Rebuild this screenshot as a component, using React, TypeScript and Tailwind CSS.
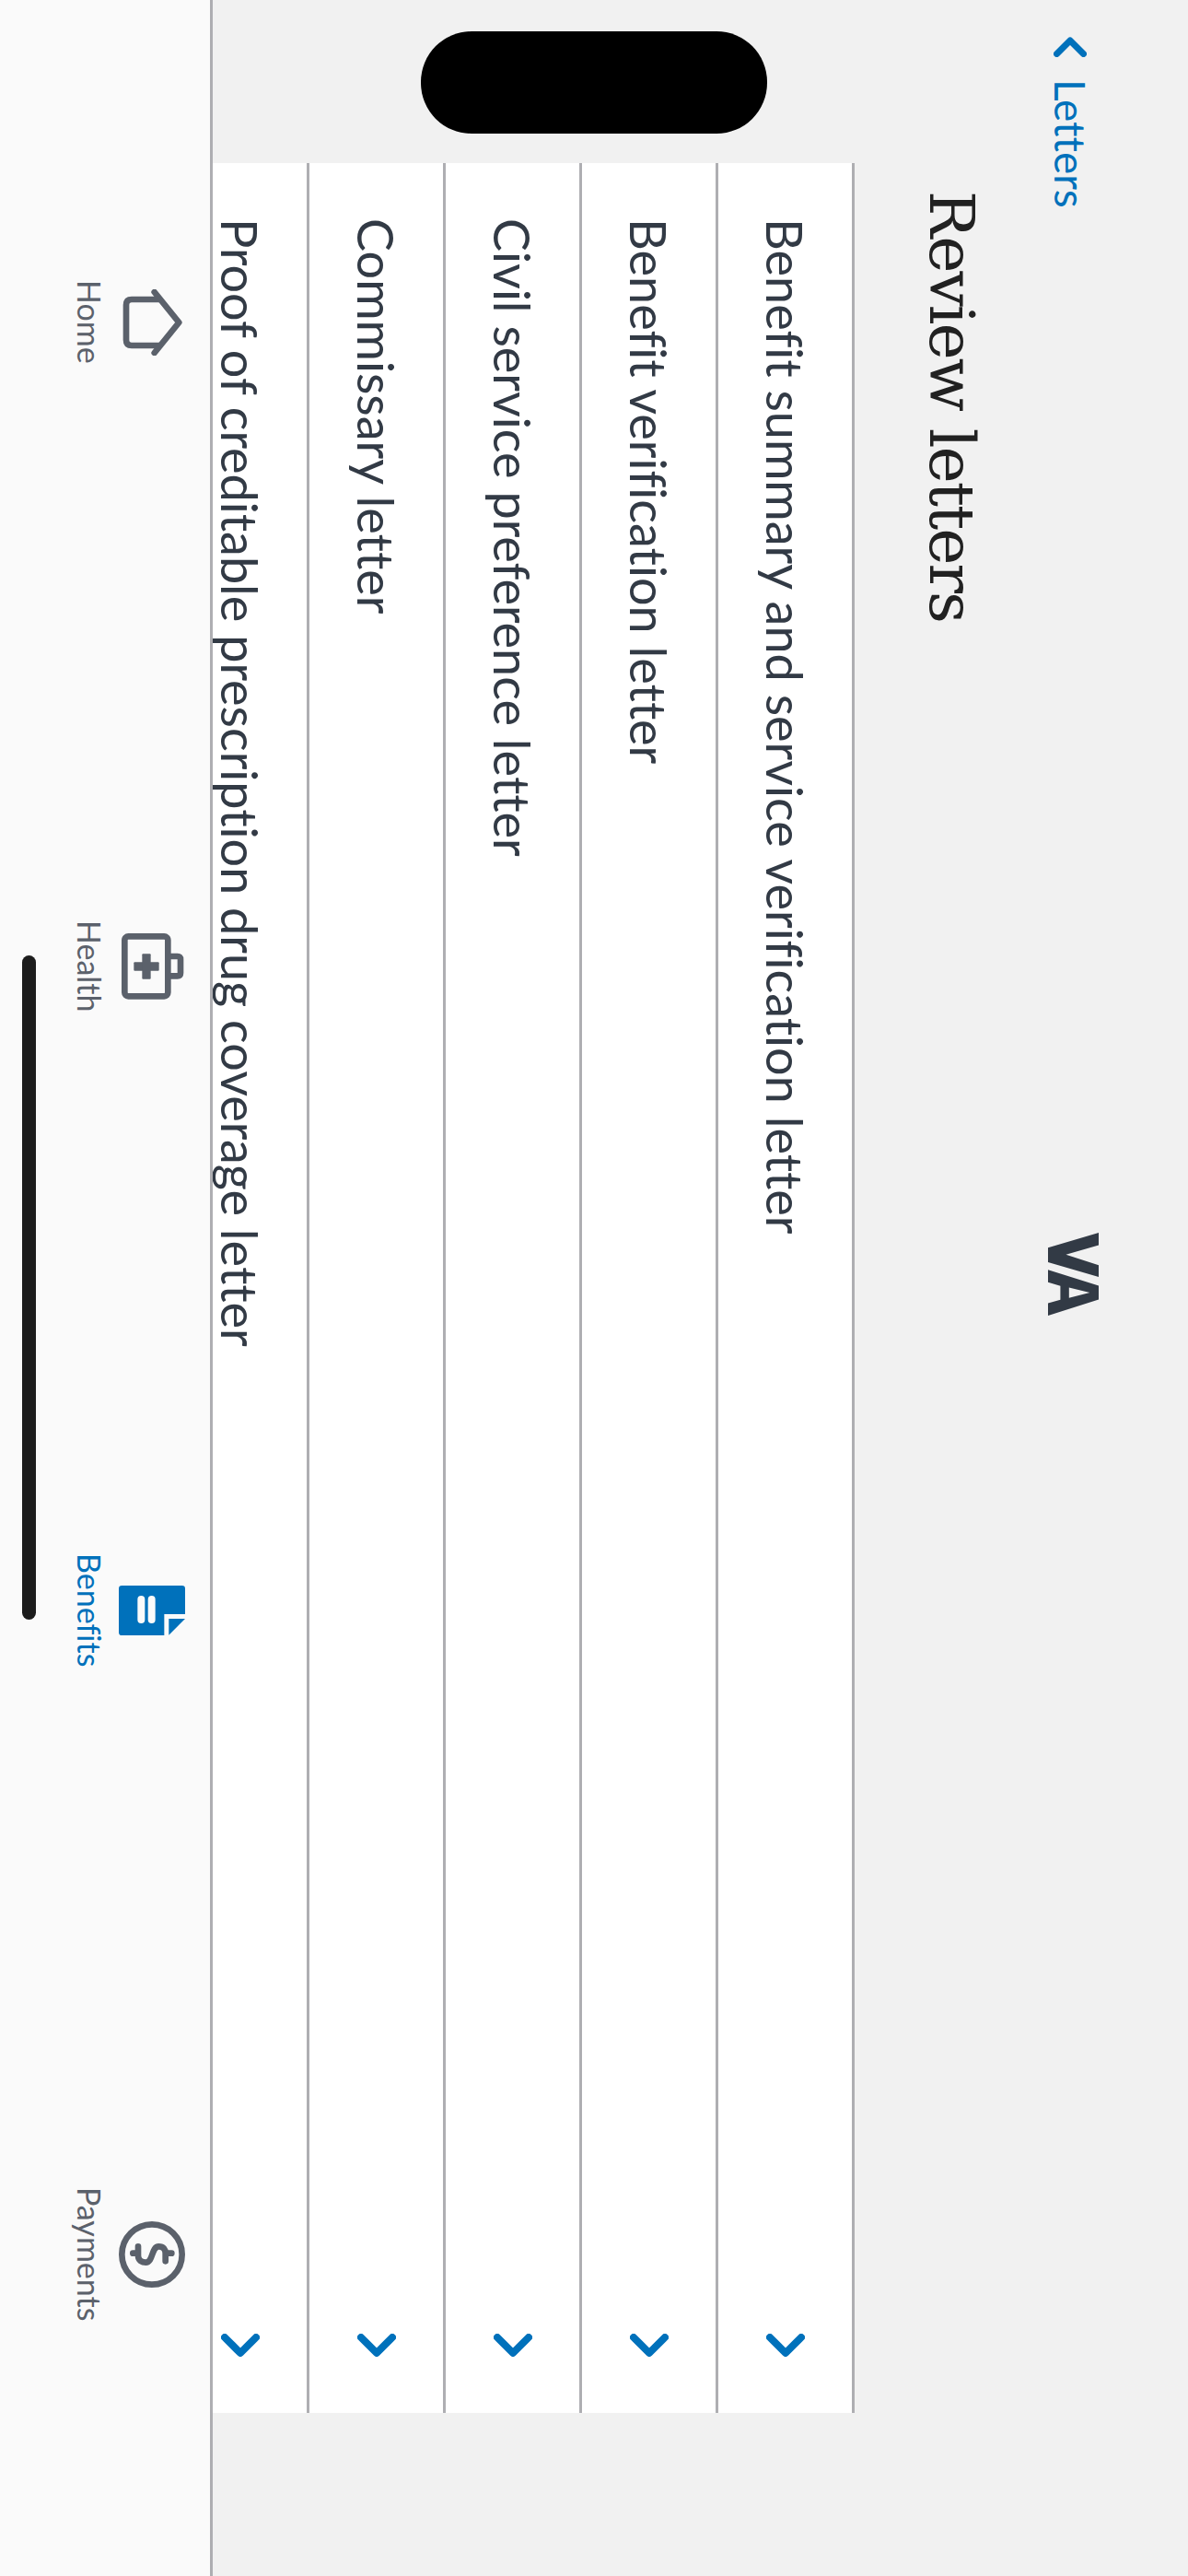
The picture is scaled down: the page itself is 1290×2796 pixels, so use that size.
function RowChevron() {
  return (
    <svg width="42" height="26" viewBox="0 0 42 26" fill="none" className="shrink-0">
      <path d="M4 4 L21 21 L38 4" stroke="#0071bb" strokeWidth="8" strokeLinecap="round" strokeLinejoin="round" />
    </svg>
  );
}

function BackChevron() {
  return (
    <svg width="36" height="22" viewBox="0 0 36 22" fill="none" className="shrink-0">
      <path d="M3.5 18.5 L18 4 L32.5 18.5" stroke="#0071bb" strokeWidth="7" strokeLinecap="round" strokeLinejoin="round" />
    </svg>
  );
}

function VaLogo() {
  return (
    <svg width="55" height="90" viewBox="177 112 164 268" fill="#323a45" className="shrink-0">
      <polygon points="341,112 341,152 235,183 341,217 341,255 177,207 177,160" />
      <path fillRule="evenodd" d="M177 232 L341 283 L341 328 L177 380 L177 340 L217 329 L217 284 L177 272 Z M245 289 L312 306 L245 323 Z" />
    </svg>
  );
}

function HomeIcon() {
  return (
    <svg width="72" height="72" viewBox="0 0 216 216" fill="none" stroke="#5b616b" strokeWidth="20" strokeLinecap="round" strokeLinejoin="round">
      <path d="M116 9 L196 108 L116 207" />
      <path d="M135 33 H42 Q24 33 24 51 V165 Q24 183 42 183 H135" strokeLinecap="butt" />
    </svg>
  );
}

function HealthIcon() {
  return (
    <svg width="72" height="72" viewBox="0 0 216 216" fill="none" stroke="#5b616b" strokeWidth="20">
      <rect x="19" y="10" width="141" height="195" rx="12" />
      <path d="M165 75 H191 Q201 75 201 85 V129 Q201 139 191 139 H165" />
      <g fill="#5b616b" stroke="none">
        <rect x="49" y="94" width="82" height="28" rx="3" />
        <rect x="76" y="67" width="28" height="82" rx="3" />
      </g>
    </svg>
  );
}

function BenefitsIcon() {
  return (
    <svg width="72" height="54" viewBox="0 0 216 162">
      <path fill="#0071bb" d="M10 0 H206 Q216 0 216 10 V93 H148 V162 H10 Q0 162 0 152 V10 Q0 0 10 0 Z" />
      <polygon fill="#0071bb" points="163,108 216,108 163,161" />
      <rect x="61" y="33" width="24" height="90" rx="12" fill="#fafafa" />
      <rect x="95" y="33" width="24" height="90" rx="12" fill="#fafafa" />
    </svg>
  );
}

function PaymentsIcon() {
  return (
    <svg width="72" height="72" viewBox="0 0 216 216" fill="none" stroke="#5b616b" strokeWidth="20" strokeLinecap="round">
      <circle cx="108" cy="108" r="98" />
      <path d="M63 82 V112 C63 128 76 134 88 134 C112 134 106 82 130 82 C146 82 152 92 152 104 V130" />
      <path d="M46 104 H62 M154 104 H172" />
    </svg>
  );
}

const letters = [
  "Benefit summary and service verification letter",
  "Benefit verification letter",
  "Civil service preference letter",
  "Commissary letter",
  "Proof of creditable prescription drug coverage letter",
];

const tabs = [
  { label: "Home", icon: <HomeIcon />, active: false },
  { label: "Health", icon: <HealthIcon />, active: false },
  { label: "Benefits", icon: <BenefitsIcon />, active: true },
  { label: "Payments", icon: <PaymentsIcon />, active: false },
];

export default function App() {
  return (
    <div className="relative w-[1290px] h-[2796px] overflow-hidden flex flex-col bg-[#f1f1f1] [writing-mode:vertical-rl] [font-variant-ligatures:none] [font-family:Lato,'Noto_Sans',sans-serif]">
      <main className="flex-1 min-w-0 overflow-hidden">
        <header className="flex flex-row items-center w-[172px] pr-[84px] pt-[40px]">
          <div className="flex flex-row items-center gap-[24px] text-[#0071bb] text-[46px] leading-[60px]">
            <BackChevron />
            <span>Letters</span>
          </div>
          <div className="mt-[1112px] ml-[6px]">
            <VaLogo />
          </div>
        </header>
        <h1 className="w-[190px] pr-[40px] pt-[207px] text-[#212121] text-[68px] tracking-[-2px] leading-[90px] font-normal [font-family:'DejaVu_Serif',serif]">
          Review letters
        </h1>
        <ul className="h-[2442px] mt-[177px] bg-white border-r-[3px] border-[#aeaeb2]">
          {letters.map((l) => (
            <li key={l} className="w-[148px] h-full flex flex-row items-center justify-between px-[60px] border-l-[3px] border-[#aeaeb2] bg-white text-[#323a45] text-[54px]">
              <span>{l}</span>
              <RowChevron />
            </li>
          ))}
        </ul>
      </main>
      <nav className="w-[231px] h-full shrink-0 flex flex-row bg-[#fafafa] border-r-[3px] border-[#aeaeb2]">
        {tabs.map((t) => (
          <div key={t.label} className="flex-1 flex flex-col items-center pr-[27px]">
            <div className="w-[72px] h-[72px] flex items-center justify-center">{t.icon}</div>
            <span className={`mr-[12px] text-[34px] leading-[40px] ${t.active ? "text-[#0071bb]" : "text-[#5b616b]"}`}>{t.label}</span>
          </div>
        ))}
      </nav>
      <div className="absolute left-[457px] top-[34px] w-[376px] h-[111px] rounded-[55px] bg-black" />
      <div className="absolute left-[24px] top-[1037px] w-[15px] h-[721px] rounded-full bg-[#1c1c1c]" />
    </div>
  );
}
